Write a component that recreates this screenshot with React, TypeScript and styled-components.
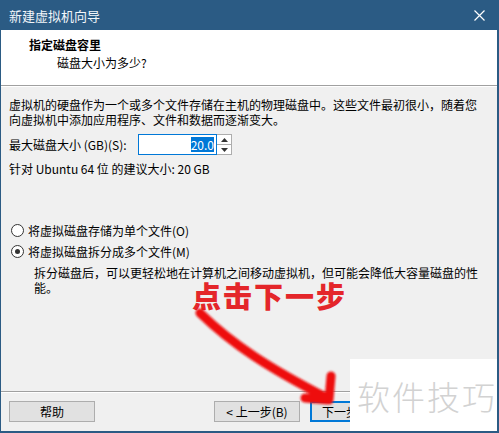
import React from "react";
import styled, { createGlobalStyle } from "styled-components";

const GlobalStyle = createGlobalStyle`
  html, body {
    margin: 0;
    padding: 0;
    background: #f0f0f0;
  }
  body {
    font-family: "Noto Sans CJK SC", "Noto Sans", sans-serif;
    font-size: 12px;
    color: #000;
  }
`;

const Window = styled.div`
  position: relative;
  width: 499px;
  height: 433px;
  box-sizing: border-box;
  display: flex;
  flex-direction: column;
  background: #f0f0f0;
  border-left: 1px solid #2b5b84;
  border-right: 2px solid #2b5b84;
  border-bottom: 2px solid #2b5b84;
  overflow: hidden;
`;

const TitleBar = styled.div`
  height: 30px;
  flex: none;
  background: #2b5b84;
  color: #f2f6fa;
  display: flex;
  align-items: center;
  justify-content: space-between;
  padding: 0 12px 0 8px;
  font-size: 13px;
`;

const Header = styled.div`
  height: 56px;
  flex: none;
  background: #fff;
  padding: 6px 0 0 28px;
  box-sizing: border-box;
  border-bottom: 1px solid #a0a0a0;
  box-shadow: 0 1px 0 #fff;
`;

const HeaderTitle = styled.div`
  font-weight: 700;
  line-height: 18px;
`;

const HeaderSub = styled.div`
  padding-left: 28px;
  line-height: 18px;
`;

const Body = styled.div`
  flex: 1;
  display: flex;
  flex-direction: column;
  padding: 11px 8px 0 8px;
  line-height: 15px;
`;

const SizeRow = styled.div`
  display: flex;
  align-items: center;
  margin-top: 7px;
  height: 21px;
`;

const SizeLabel = styled.span`
  width: 129px;
`;

const Spin = styled.div`
  display: flex;
  height: 21px;
`;

const SpinInput = styled.div`
  width: 79px;
  box-sizing: border-box;
  border: 1px solid #0078d7;
  background: #fff;
  display: flex;
  justify-content: flex-end;
  align-items: center;
  padding-right: 2px;
`;

const Selected = styled.span`
  background: #0078d7;
  color: #fff;
  line-height: 15px;
`;

const SpinButtons = styled.div`
  width: 15px;
  height: 21px;
  display: flex;
  flex-direction: column;
  border: 1px solid #adadad;
  border-left: none;
  box-sizing: border-box;
  background: #fff;
  overflow: hidden;
`;

const SpinBtn = styled.div`
  flex: 1;
  display: flex;
  align-items: center;
  justify-content: center;
  & + & {
    border-top: 1px solid #adadad;
  }
`;

const Hint = styled.div`
  margin-top: 6px;
`;

const Options = styled.div`
  margin-top: 47px;
  display: flex;
  flex-direction: column;
  gap: 6px;
`;

const Radio = styled.div`
  display: flex;
  align-items: center;
  gap: 4px;
`;

const Circle = styled.span<{ $on?: boolean }>`
  width: 11px;
  height: 11px;
  border-radius: 50%;
  border: 1px solid #333;
  background: #fff;
  margin-left: 2px;
  display: flex;
  align-items: center;
  justify-content: center;
  &::after {
    content: "";
    width: 5px;
    height: 5px;
    border-radius: 50%;
    background: ${(p) => (p.$on ? "#333" : "transparent")};
  }
`;

const Desc = styled.div`
  margin-top: 6px;
  padding-left: 25px;
`;

const Footer = styled.div`
  height: 40px;
  flex: none;
  border-top: 1px solid #a0a0a0;
  box-shadow: inset 0 1px 0 #fff;
  display: flex;
  align-items: center;
  gap: 10px;
  padding: 0 5px 0 8px;
  box-sizing: border-box;
`;

const Button = styled.div<{ $focus?: boolean }>`
  width: 86px;
  height: 21px;
  box-sizing: border-box;
  border: 1px solid ${(p) => (p.$focus ? "#0078d7" : "#adadad")};
  box-shadow: ${(p) => (p.$focus ? "inset 0 0 0 1px #0078d7" : "none")};
  background: #e1e1e1;
  display: flex;
  align-items: center;
  justify-content: center;
`;

const Spacer = styled.div`
  flex: 1;
`;

const Callout = styled.div`
  position: absolute;
  left: 191px;
  top: 279px;
  font-size: 29px;
  font-weight: 900;
  color: #e4262a;
  letter-spacing: 2px;
  line-height: 32px;
`;

const Arrow = styled.svg`
  position: absolute;
  left: 0;
  top: 0;
  pointer-events: none;
`;

const Watermark = styled.div`
  position: absolute;
  left: 349px;
  top: 359px;
  width: 150px;
  height: 74px;
  background: #fff;
  color: #d2d2d2;
  font-size: 33px;
  font-weight: 300;
  display: flex;
  align-items: center;
  padding-left: 7px;
  box-sizing: border-box;
  letter-spacing: 2px;
`;

export default function App() {
  return (
    <>
      <GlobalStyle />
      <Window>
        <TitleBar>
          <span>新建虚拟机向导</span>
          <svg width="11" height="11" viewBox="0 0 11 11">
            <path d="M0.5 0.5 L10.5 10.5 M10.5 0.5 L0.5 10.5" stroke="#fff" strokeWidth="1.2" />
          </svg>
        </TitleBar>
        <Header>
          <HeaderTitle>指定磁盘容里</HeaderTitle>
          <HeaderSub>磁盘大小为多少?</HeaderSub>
        </Header>
        <Body>
          <div>
            虚拟机的硬盘作为一个或多个文件存储在主机的物理磁盘中。这些文件最初很小，随着您
            向虚拟机中添加应用程序、文件和数据而逐渐变大。
          </div>
          <SizeRow>
            <SizeLabel>最大磁盘大小 (GB)(S):</SizeLabel>
            <Spin>
              <SpinInput>
                <Selected>20.0</Selected>
              </SpinInput>
              <SpinButtons>
                <SpinBtn>
                  <svg width="7" height="4" viewBox="0 0 7 4">
                    <path d="M0 4 L3.5 0 L7 4 Z" fill="#333" />
                  </svg>
                </SpinBtn>
                <SpinBtn>
                  <svg width="7" height="4" viewBox="0 0 7 4">
                    <path d="M0 0 L3.5 4 L7 0 Z" fill="#333" />
                  </svg>
                </SpinBtn>
              </SpinButtons>
            </Spin>
          </SizeRow>
          <Hint>针对 Ubuntu 64 位 的建议大小: 20 GB</Hint>
          <Options>
            <Radio>
              <Circle />
              <span>将虚拟磁盘存储为单个文件(O)</span>
            </Radio>
            <Radio>
              <Circle $on />
              <span>将虚拟磁盘拆分成多个文件(M)</span>
            </Radio>
          </Options>
          <Desc>拆分磁盘后，可以更轻松地在计算机之间移动虚拟机，但可能会降低大容量磁盘的性能。</Desc>
        </Body>
        <Footer>
          <Button>帮助</Button>
          <Spacer />
          <Button>&lt; 上一步(B)</Button>
          <Button $focus>下一步(N) &gt;</Button>
          <Button>取消</Button>
        </Footer>
        <Callout>点击下一步</Callout>
        <Arrow width="499" height="433" viewBox="0 0 499 433">
          <defs>
            <filter id="soft">
              <feGaussianBlur stdDeviation="1.2" />
            </filter>
          </defs>
          <g filter="url(#soft)" stroke="#ee1111" fill="none" strokeLinecap="round" strokeLinejoin="round">
            <path d="M199 313 C 232 345, 268 368, 326 398" strokeWidth="9" />
            <path d="M330 376 L 328 400 L 304 398" strokeWidth="9" />
          </g>
        </Arrow>
        <Watermark>软件技巧</Watermark>
      </Window>
    </>
  );
}
